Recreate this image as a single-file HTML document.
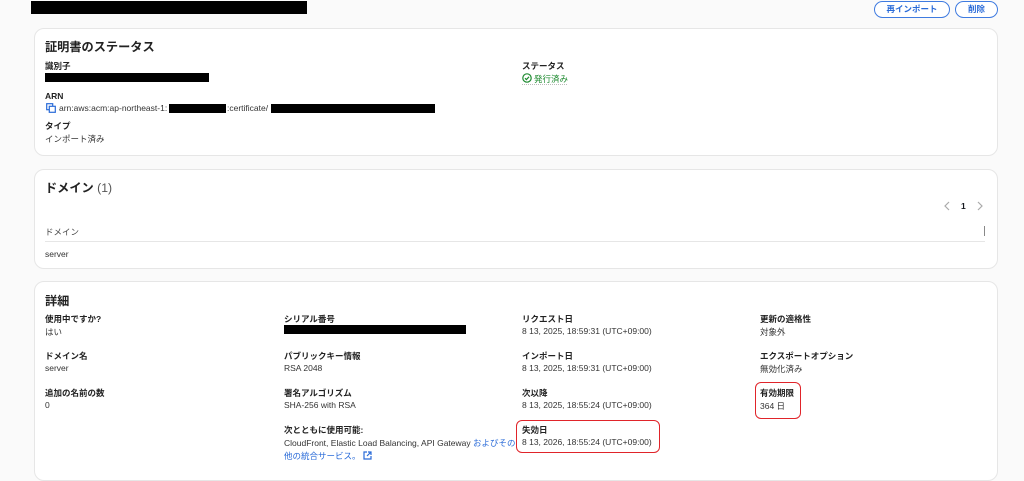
<!DOCTYPE html>
<html><head><meta charset="utf-8"><style>
*{margin:0;padding:0;box-sizing:border-box}
body{width:1024px;height:468px;overflow:hidden;background:#fafafa;font-family:"Liberation Sans","Noto Sans CJK JP",sans-serif;color:#16191f;position:relative}
.a{position:absolute;white-space:nowrap}
.card{position:absolute;left:34px;width:964px;background:#fff;border:1px solid #e6e6e6;border-radius:10px}
.t{font-size:12.2px;font-weight:bold;color:#222}
.l{font-size:8.5px;font-weight:bold;color:#222}
.v{font-size:8.5px;color:#333}
.bk{position:absolute;background:#000}
.btn{position:absolute;top:1px;height:17px;border:1px solid #3f7be0;border-radius:9px;color:#2a6bd8;font-size:8.5px;font-weight:bold;text-align:center;line-height:15px;background:#fff}
.red{position:absolute;border:1.5px solid #e0242a;border-radius:6px}
</style></head><body>
<div class="bk" style="left:31px;top:1px;width:276px;height:13px"></div>
<div class="btn" style="left:874px;width:76px">再インポート</div>
<div class="btn" style="left:955px;width:43px">削除</div>

<div class="card" style="top:28px;height:128px"></div>
<div class="a t" style="left:45px;top:37px">証明書のステータス</div>
<div class="a l" style="left:45px;top:60px">識別子</div>
<div class="bk" style="left:45px;top:73px;width:164px;height:9px"></div>
<div class="a l" style="left:45px;top:91px">ARN</div>
<svg class="a" style="left:46px;top:103px" width="10" height="10" viewBox="0 0 10 10"><rect x="0.7" y="0.7" width="6" height="6" fill="none" stroke="#2a6bd8" stroke-width="1.2"/><rect x="3.3" y="3.3" width="6" height="6" fill="#fff" stroke="#2a6bd8" stroke-width="1.2"/></svg>
<div class="a v" style="left:59px;top:103px">arn:aws:acm:ap-northeast-1:</div>
<div class="bk" style="left:169px;top:104px;width:57px;height:9px"></div>
<div class="a v" style="left:227px;top:103px">:certificate/</div>
<div class="bk" style="left:271px;top:104px;width:164px;height:9px"></div>
<div class="a l" style="left:45px;top:120px">タイプ</div>
<div class="a v" style="left:45px;top:133px">インポート済み</div>
<div class="a l" style="left:522px;top:60px">ステータス</div>
<svg class="a" style="left:522px;top:73px" width="10" height="10" viewBox="0 0 10 10"><circle cx="5" cy="5" r="4.2" fill="none" stroke="#1d8a2f" stroke-width="1.2"/><path d="M3 5.2l1.4 1.4L7 3.8" fill="none" stroke="#1d8a2f" stroke-width="1.2"/></svg>
<div class="a v" style="left:534px;top:73px;color:#1d8a2f">発行済み</div>
<div class="a" style="left:522px;top:84px;width:45px;border-top:1px dotted #bbb"></div>

<div class="card" style="top:169px;height:100px"></div>
<div class="a t" style="left:45px;top:178px">ドメイン <span style="font-weight:normal;color:#555">(1)</span></div>
<svg class="a" style="left:943px;top:201px" width="8" height="10" viewBox="0 0 8 10"><path d="M6 1L2 5l4 4" fill="none" stroke="#aaa" stroke-width="1.2"/></svg>
<div class="a" style="left:961px;top:201px;font-size:8.5px;font-weight:bold">1</div>
<svg class="a" style="left:976px;top:201px" width="8" height="10" viewBox="0 0 8 10"><path d="M2 1l4 4-4 4" fill="none" stroke="#aaa" stroke-width="1.2"/></svg>
<div class="a v" style="left:45px;top:226px;font-weight:normal;color:#444">ドメイン</div>
<div class="a" style="left:984px;top:226px;width:1px;height:10px;background:#888"></div>
<div class="a" style="left:45px;top:241px;width:940px;height:1px;background:#e6e6e6"></div>
<div class="a v" style="left:45px;top:249px">server</div>

<div class="card" style="top:281px;height:200px"></div>
<div class="a t" style="left:45px;top:291px">詳細</div>

<div class="a l" style="left:45px;top:313px">使用中ですか?</div>
<div class="a v" style="left:45px;top:326px">はい</div>
<div class="a l" style="left:45px;top:350px">ドメイン名</div>
<div class="a v" style="left:45px;top:363px">server</div>
<div class="a l" style="left:45px;top:387px">追加の名前の数</div>
<div class="a v" style="left:45px;top:400px">0</div>

<div class="a l" style="left:284px;top:313px">シリアル番号</div>
<div class="bk" style="left:284px;top:325px;width:182px;height:9px"></div>
<div class="a l" style="left:284px;top:350px">パブリックキー情報</div>
<div class="a v" style="left:284px;top:363px">RSA 2048</div>
<div class="a l" style="left:284px;top:387px">署名アルゴリズム</div>
<div class="a v" style="left:284px;top:400px">SHA-256 with RSA</div>
<div class="a l" style="left:284px;top:424px">次とともに使用可能:</div>
<div class="a v" style="left:284px;top:437px">CloudFront, Elastic Load Balancing, API Gateway <span style="color:#2a6bd8">およびその</span></div>
<div class="a v" style="left:284px;top:450px;color:#2a6bd8">他の統合サービス。 <svg width="9" height="9" viewBox="0 0 9 9" style="vertical-align:-1px"><path d="M4 1H1v7h7V5M5 1h3v3M8 1L4 5" fill="none" stroke="#2a6bd8" stroke-width="1.2"/></svg></div>

<div class="a l" style="left:522px;top:313px">リクエスト日</div>
<div class="a v" style="left:522px;top:326px">8 13, 2025, 18:59:31 (UTC+09:00)</div>
<div class="a l" style="left:522px;top:350px">インポート日</div>
<div class="a v" style="left:522px;top:363px">8 13, 2025, 18:59:31 (UTC+09:00)</div>
<div class="a l" style="left:522px;top:387px">次以降</div>
<div class="a v" style="left:522px;top:400px">8 13, 2025, 18:55:24 (UTC+09:00)</div>
<div class="a l" style="left:522px;top:424px">失効日</div>
<div class="a v" style="left:522px;top:437px">8 13, 2026, 18:55:24 (UTC+09:00)</div>
<div class="red" style="left:516px;top:420px;width:144px;height:33px"></div>

<div class="a l" style="left:760px;top:313px">更新の適格性</div>
<div class="a v" style="left:760px;top:326px">対象外</div>
<div class="a l" style="left:760px;top:350px">エクスポートオプション</div>
<div class="a v" style="left:760px;top:363px">無効化済み</div>
<div class="a l" style="left:760px;top:387px">有効期限</div>
<div class="a v" style="left:760px;top:400px">364 日</div>
<div class="red" style="left:755px;top:382px;width:46px;height:37px"></div>
</body></html>
